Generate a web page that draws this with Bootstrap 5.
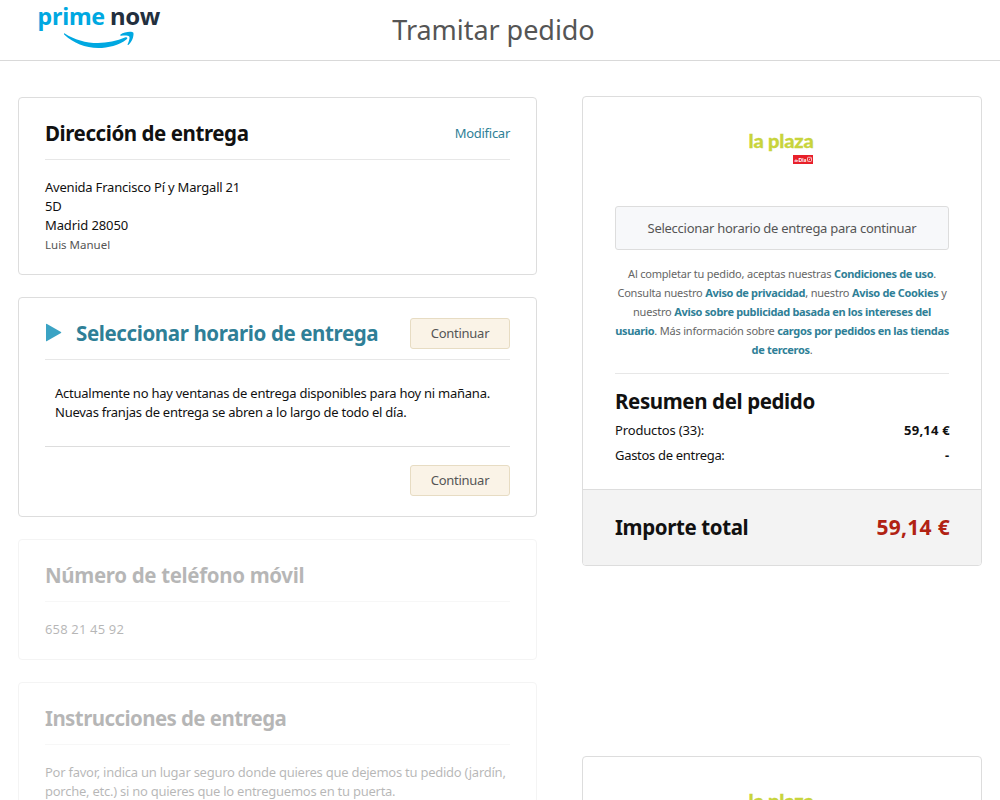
<!DOCTYPE html>
<html lang="es">
<head>
<meta charset="utf-8">
<meta name="viewport" content="width=device-width, initial-scale=1">
<title>Tramitar pedido</title>
<link rel="stylesheet" href="https://cdn.jsdelivr.net/npm/bootstrap@5.3.0/dist/css/bootstrap.min.css">
<style>
body{font-family:"Noto Sans",sans-serif;font-size:13px;line-height:19px;letter-spacing:-.21px;color:#111;background:#fff;height:800px;overflow:hidden}
main{height:739px;overflow:hidden}
.topbar{height:61px;border-bottom:1px solid #d9d9d9}
.brand{left:36px;top:0}
.page-title{font-size:27px;line-height:60px;color:#555;letter-spacing:-.05px;padding-right:13px}
.steps{width:519px;margin-left:18px;padding-top:36px;gap:22px}
.summary{width:400px;margin-right:18px;padding-top:35px;gap:190px}
.panel{border:1px solid #ddd;border-radius:4px;background:#fff}
.panel-pad{padding:0 26px}
.address{height:178px}
.schedule{height:220px}
.phone{height:121px}
.instructions{height:150px}
.step-head{height:62px;padding-top:12px;border-bottom:1px solid #e7e7e7}
.step-title{font-size:20.5px;line-height:28px;font-weight:700;letter-spacing:-.39px}
.step-head .step-title{padding-top:9px}
.step-link{padding-top:14px;letter-spacing:-.27px}
.step-body{padding-top:18px}
.teal,.teal:hover{color:#2f7f97;text-decoration:none}
.person{font-size:11.5px;letter-spacing:0;color:#555}
.notice{padding:24px 0 24px 10px;letter-spacing:-.25px;border-bottom:1px solid #ddd}
.marker{margin:13px 14px 0 0}
.btn-go{width:100px;height:31px;padding:0;font-size:13px;line-height:29px;letter-spacing:-.27px;color:#555;background:#faf3e7;border:1px solid #e7dcc3;border-radius:3px}
.muted-step{opacity:.3}
.order-body{padding:0 32px}
.btn-wait{height:44px;font-size:13px;line-height:42px;letter-spacing:-.27px;padding:0;color:#555;background:#f7f8fa;border:1px solid #ddd;border-radius:3px}
.legal{font-size:11px;letter-spacing:-.2px;color:#666;padding:14px 0 14px;border-bottom:1px solid #e7e7e7}
.legal a{font-weight:700;letter-spacing:-.33px}
.order-title{padding:13px 0 3px}
.order-row{height:25px;line-height:25px}
.amount{letter-spacing:.24px;margin-right:-1px}
.total{height:76px;background:#f3f3f3;border-top:1px solid #ddd;border-radius:0 0 3px 3px;padding:0 32px 2px;margin-top:21px}
.total .amount{color:#b12213;font-size:21px;letter-spacing:.3px}
</style>
</head>
<body>
<header class="topbar position-relative text-center">
<svg class="brand position-absolute" width="128" height="56" viewBox="36 0 128 56" role="img" aria-label="prime now">
<text x="37.500" y="24.500" font-family="Noto Sans" font-weight="700" font-size="23" fill="#00a8e1" textLength="67.500" lengthAdjust="spacingAndGlyphs">prime</text>
<text x="110" y="24.500" font-family="Noto Sans" font-weight="700" font-size="23" fill="#232f3e" textLength="50" lengthAdjust="spacingAndGlyphs">now</text>
<path fill="#00a8e1" d="M64.800 33.400C74 39.500 86 43 98 43c9 0 19-2 27.500-5.700 1.600-.6 2.600.8 1.200 1.900C119 45.300 108 48 98.300 48c-13 0-25-5-33.900-13.200-.8-.8-.4-1.800.4-1.400Z"/>
<path fill="#00a8e1" d="M120.500 34.400c3.500-2.600 11.600-3.200 12.700-1.800 1.100 1.500-.4 8.800-4.600 12.200-.7.500-1.300.2-1-.5 1-2.300 2.600-6.600 1.600-7.900-1-1.300-5.700-1-8-.7-.9.100-1.200-.8-.7-1.300Z"/>
</svg>
<h1 class="page-title m-0 fw-normal">Tramitar pedido</h1>
</header>
<main class="d-flex justify-content-between align-items-start">
<div class="steps d-flex flex-column">
<section class="panel panel-pad address">
<div class="step-head d-flex justify-content-between">
<h2 class="step-title m-0" style="letter-spacing:-.43px">Dirección de entrega</h2>
<a class="teal step-link" href="#">Modificar</a>
</div>
<div class="step-body">Avenida Francisco Pí y Margall 21<br>5D<br><span style="letter-spacing:-.11px">Madrid 28050</span><br><span class="person">Luis Manuel</span></div>
</section>
<section class="panel panel-pad schedule">
<div class="step-head d-flex">
<svg class="marker" width="17" height="19" viewBox="0 0 17 19" aria-hidden="true"><path fill="#3ba3c4" d="M1 1.300Q1 .3 2 .9L16 9Q16.600 9.500 16 10L2 18.100Q1 18.700 1 17.700Z"/></svg>
<h2 class="step-title m-0 teal">Seleccionar horario de entrega</h2>
<button class="btn btn-go ms-auto mt-2" type="button">Continuar</button>
</div>
<div class="notice text-nowrap">Actualmente no hay ventanas de entrega disponibles para hoy ni mañana.<br>Nuevas franjas de entrega se abren a lo largo de todo el día.</div>
<div class="d-flex justify-content-end step-body"><button class="btn btn-go" type="button">Continuar</button></div>
</section>
<section class="panel panel-pad phone muted-step">
<div class="step-head"><h2 class="step-title m-0" style="letter-spacing:-.35px">Número de teléfono móvil</h2></div>
<div class="step-body" style="letter-spacing:.16px">658 21 45 92</div>
</section>
<section class="panel panel-pad instructions muted-step">
<div class="step-head"><h2 class="step-title m-0" style="letter-spacing:-.59px">Instrucciones de entrega</h2></div>
<div class="step-body text-nowrap" style="letter-spacing:-.25px">Por favor, indica un lugar seguro donde quieres que dejemos tu pedido (jardín,<br>porche, etc.) si no quieres que lo entreguemos en tu puerta.</div>
</section>
</div>
<div class="summary d-flex flex-column">
<section class="panel">
<div class="order-body">
<svg class="d-block mx-auto" width="80" height="109" viewBox="742 97 80 109" role="img" aria-label="la plaza">
<text x="748.500" y="148" font-family="Lato" font-weight="900" font-size="19" fill="#c8d43c" stroke="#c8d43c" stroke-width=".3" textLength="65" lengthAdjust="spacingAndGlyphs">la plaza</text>
<rect x="793" y="155" width="20" height="9" fill="#e8202a"/>
<text x="794.500" y="161.500" font-family="Lato" font-weight="700" font-size="3.500" fill="#fff">de</text>
<text x="798.500" y="161.500" font-family="Lato" font-weight="900" font-size="5" fill="#fff" textLength="7.500">Dia</text>
<rect x="807.500" y="157.300" width="4" height="4.200" rx=".8" fill="none" stroke="#fff" stroke-width=".7"/><path d="M808.800 160.600l1.500-2.200" stroke="#fff" stroke-width=".7"/>
</svg>
<button class="btn btn-wait w-100 d-block" type="button">Seleccionar horario de entrega para continuar</button>
<div class="legal text-center text-nowrap">Al completar tu pedido, aceptas nuestras <a class="teal" href="#">Condiciones de uso</a>.<br>Consulta nuestro <a class="teal" href="#">Aviso de privacidad</a>, nuestro <a class="teal" href="#">Aviso de Cookies</a> y<br>nuestro <a class="teal" href="#">Aviso sobre publicidad basada en los intereses del<br>usuario</a>. Más información sobre <a class="teal" href="#">cargos por pedidos en las tiendas<br>de terceros</a>.</div>
<h2 class="step-title order-title m-0">Resumen del pedido</h2>
<div class="order-row d-flex justify-content-between"><span style="letter-spacing:-.15px">Productos (33):</span><b class="amount">59,14 €</b></div>
<div class="order-row d-flex justify-content-between"><span style="letter-spacing:-.31px">Gastos de entrega:</span><b>-</b></div>
</div>
<div class="total d-flex justify-content-between align-items-center">
<span class="step-title">Importe total</span><span class="step-title amount">59,14 €</span>
</div>
</section>
<section class="panel">
<div class="order-body">
<svg class="d-block mx-auto" width="80" height="109" viewBox="742 97 80 109" role="img" aria-label="la plaza">
<text x="748.500" y="148" font-family="Lato" font-weight="900" font-size="19" fill="#c8d43c" stroke="#c8d43c" stroke-width=".3" textLength="65" lengthAdjust="spacingAndGlyphs">la plaza</text>
</svg>
</div>
</section>
</div>
</main>
<script src="https://cdn.jsdelivr.net/npm/bootstrap@5.3.0/dist/js/bootstrap.bundle.min.js"></script>
</body>
</html>
